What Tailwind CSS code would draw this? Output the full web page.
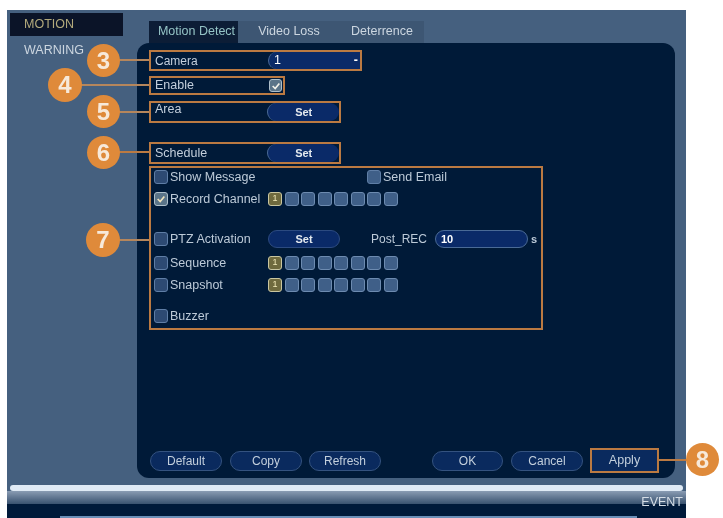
<!DOCTYPE html>
<html lang="en">
<head>
    <meta charset="UTF-8">
    <title>Motion Detect</title>
    <script src="https://cdn.jsdelivr.net/npm/@tailwindcss/browser@4"></script>
</head>
<body class="bg-white">
<div class="relative w-[723px] h-[518px] overflow-hidden bg-white font-['Liberation_Sans',Arial,sans-serif] text-[12.5px] text-[#c3cfdc] blur-[0.6px]">

    <!-- dvr window -->
    <div class="absolute left-[7px] top-[10px] w-[679px] h-[508px] flex flex-col bg-[#45607f]">
        <div class="flex h-[468px]">
            <!-- sidebar -->
            <aside class="w-[130px] pt-[3px] pl-[3px]">
                <div class="w-[113px] h-[23px] bg-[#0b1428] pl-[14px] flex items-center text-[#b3aa7c]">MOTION</div>
                <div class="pl-[14px] mt-[5px] text-[#ccd6e0]">WARNING</div>
            </aside>

            <div class="w-[538px] flex flex-col">
                <!-- tabs -->
                <div class="flex h-[33px] pt-[11px] pl-[12px]">
                    <div class="w-[89px] bg-[#0c1d36] text-[#95c4c6] flex items-center justify-center pl-[6px] pb-[2px]">Motion Detect</div>
                    <div class="w-[88px] bg-[#3d5673] text-[#ccd6e0] flex items-center justify-center pl-[14px] pb-[2px]">Video Loss</div>
                    <div class="w-[98px] bg-[#3d5673] text-[#ccd6e0] flex items-center justify-center pl-[14px] pb-[2px]">Deterrence</div>
                </div>

                <!-- panel -->
                <main class="flex-1 bg-[#001a38] rounded-[12px] flex flex-col pl-[12px]">
                    <div class="mt-[7px] w-[213px] h-[21px] border-2 border-[#bb7a42] flex items-center">
                        <span class="w-[117px] pl-[4px] text-[12px]">Camera</span>
                        <div class="w-[92px] h-[17px] rounded-l-full bg-[#0a2a68] border-l border-[#4a6a96] flex items-center justify-between pl-[5px] pr-[2px] text-white">
                            <span>1</span><span class="font-bold leading-none">-</span>
                        </div>
                    </div>

                    <div class="mt-[5px] w-[136px] h-[19px] border-2 border-[#bb7a42] flex items-center">
                        <span class="w-[118px] pl-[4px]">Enable</span>
                        <div class="w-[13px] h-[13px] rounded-[3px] bg-[#5a7488] border border-[#aebfca] flex items-center justify-center">
                            <svg viewBox="0 0 12 12" class="w-[10px] h-[10px]"><path d="M2 6l3 3 5-6" fill="none" stroke="#f2f2ea" stroke-width="2"/></svg>
                        </div>
                    </div>

                    <div class="mt-[6px] w-[192px] h-[22px] border-2 border-[#bb7a42] flex items-center">
                        <span class="w-[117px] pl-[4px] -mt-[6px]">Area</span>
                        <div class="w-[72px] h-[18px] rounded-full bg-[#0a2a68] border-l border-[#4a6a96] flex items-center justify-center font-bold text-[11px] text-[#e4e9ef]">Set</div>
                    </div>

                    <div class="mt-[19px] w-[192px] h-[22px] border-2 border-[#bb7a42] flex items-center">
                        <span class="w-[117px] pl-[4px]">Schedule</span>
                        <div class="w-[72px] h-[18px] rounded-full bg-[#0a2a68] border-l border-[#4a6a96] flex items-center justify-center font-bold text-[11px] text-[#e4e9ef]">Set</div>
                    </div>

                    <!-- linkage options -->
                    <div class="mt-[2px] w-[394px] h-[164px] border-2 border-[#bb7a42] pl-[3px] text-[#bccad8]">
                        <div class="h-[18px] flex items-center">
                            <span class="w-[14px] h-[14px] rounded-[3px] bg-[#2d4a73] border border-[#5f7ea6] mr-[2px]"></span>
                            <span class="w-[197px]">Show Message</span>
                            <span class="w-[14px] h-[14px] rounded-[3px] bg-[#3f5f88] border border-[#5f7ea6] mr-[2px]"></span>
                            <span>Send Email</span>
                        </div>

                        <div class="h-[18px] mt-[4px] flex items-center">
                            <span class="w-[14px] h-[14px] rounded-[3px] bg-[#5a7488] border border-[#aebfca] mr-[2px] flex items-center justify-center">
                                <svg viewBox="0 0 12 12" class="w-[10px] h-[10px]"><path d="M2 6l3 3 5-6" fill="none" stroke="#efe3bd" stroke-width="2"/></svg>
                            </span>
                            <span class="w-[98px] whitespace-nowrap">Record Channel</span>
                            <div class="flex gap-[2.5px] text-[9px]">
                                <span class="w-[14px] h-[14px] rounded-[3px] bg-[#6f6a3e] border border-[#c9c6a0] text-[#f0e9b8] flex items-center justify-center">1</span>
                                <span class="w-[14px] h-[14px] rounded-[3px] bg-[#3f5f88] border border-[#6d8bb0]"></span>
                                <span class="w-[14px] h-[14px] rounded-[3px] bg-[#3f5f88] border border-[#6d8bb0]"></span>
                                <span class="w-[14px] h-[14px] rounded-[3px] bg-[#3f5f88] border border-[#6d8bb0]"></span>
                                <span class="w-[14px] h-[14px] rounded-[3px] bg-[#3f5f88] border border-[#6d8bb0]"></span>
                                <span class="w-[14px] h-[14px] rounded-[3px] bg-[#3f5f88] border border-[#6d8bb0]"></span>
                                <span class="w-[14px] h-[14px] rounded-[3px] bg-[#3f5f88] border border-[#6d8bb0]"></span>
                                <span class="w-[14px] h-[14px] rounded-[3px] bg-[#3f5f88] border border-[#6d8bb0]"></span>
                            </div>
                        </div>

                        <div class="h-[18px] mt-[22px] flex items-center">
                            <span class="w-[14px] h-[14px] rounded-[3px] bg-[#2d4a73] border border-[#5f7ea6] mr-[2px]"></span>
                            <span class="w-[98px] whitespace-nowrap">PTZ Activation</span>
                            <div class="w-[72px] h-[18px] rounded-full bg-[#0a2a68] border border-[#2c4a80] flex items-center justify-center font-bold text-[11px] text-[#e4e9ef]">Set</div>
                            <span class="ml-[31px] w-[64px] text-[12px]">Post_REC</span>
                            <div class="w-[93px] h-[18px] rounded-[9px] bg-[#0a2a68] border border-[#4a6a96] pl-[5px] flex items-center font-bold text-[11px] text-white">10</div>
                            <span class="ml-[3px] font-bold text-[11px]">s</span>
                        </div>

                        <div class="h-[18px] mt-[6px] flex items-center">
                            <span class="w-[14px] h-[14px] rounded-[3px] bg-[#2d4a73] border border-[#5f7ea6] mr-[2px]"></span>
                            <span class="w-[98px]">Sequence</span>
                            <div class="flex gap-[2.5px] text-[9px]">
                                <span class="w-[14px] h-[14px] rounded-[3px] bg-[#6f6a3e] border border-[#c9c6a0] text-[#f0e9b8] flex items-center justify-center">1</span>
                                <span class="w-[14px] h-[14px] rounded-[3px] bg-[#3f5f88] border border-[#6d8bb0]"></span>
                                <span class="w-[14px] h-[14px] rounded-[3px] bg-[#3f5f88] border border-[#6d8bb0]"></span>
                                <span class="w-[14px] h-[14px] rounded-[3px] bg-[#3f5f88] border border-[#6d8bb0]"></span>
                                <span class="w-[14px] h-[14px] rounded-[3px] bg-[#3f5f88] border border-[#6d8bb0]"></span>
                                <span class="w-[14px] h-[14px] rounded-[3px] bg-[#3f5f88] border border-[#6d8bb0]"></span>
                                <span class="w-[14px] h-[14px] rounded-[3px] bg-[#3f5f88] border border-[#6d8bb0]"></span>
                                <span class="w-[14px] h-[14px] rounded-[3px] bg-[#3f5f88] border border-[#6d8bb0]"></span>
                            </div>
                        </div>

                        <div class="h-[18px] mt-[4px] flex items-center">
                            <span class="w-[14px] h-[14px] rounded-[3px] bg-[#2d4a73] border border-[#5f7ea6] mr-[2px]"></span>
                            <span class="w-[98px]">Snapshot</span>
                            <div class="flex gap-[2.5px] text-[9px]">
                                <span class="w-[14px] h-[14px] rounded-[3px] bg-[#6f6a3e] border border-[#c9c6a0] text-[#f0e9b8] flex items-center justify-center">1</span>
                                <span class="w-[14px] h-[14px] rounded-[3px] bg-[#3f5f88] border border-[#6d8bb0]"></span>
                                <span class="w-[14px] h-[14px] rounded-[3px] bg-[#3f5f88] border border-[#6d8bb0]"></span>
                                <span class="w-[14px] h-[14px] rounded-[3px] bg-[#3f5f88] border border-[#6d8bb0]"></span>
                                <span class="w-[14px] h-[14px] rounded-[3px] bg-[#3f5f88] border border-[#6d8bb0]"></span>
                                <span class="w-[14px] h-[14px] rounded-[3px] bg-[#3f5f88] border border-[#6d8bb0]"></span>
                                <span class="w-[14px] h-[14px] rounded-[3px] bg-[#3f5f88] border border-[#6d8bb0]"></span>
                                <span class="w-[14px] h-[14px] rounded-[3px] bg-[#3f5f88] border border-[#6d8bb0]"></span>
                            </div>
                        </div>

                        <div class="h-[18px] mt-[13px] flex items-center">
                            <span class="w-[14px] h-[14px] rounded-[3px] bg-[#2d4a73] border border-[#5f7ea6] mr-[2px]"></span>
                            <span>Buzzer</span>
                        </div>
                    </div>

                    <!-- footer buttons -->
                    <div class="mt-auto mb-[5px] flex items-center h-[25px] text-[#c3cfdc] text-[12px]">
                        <div class="ml-[1px] w-[72px] h-[20px] rounded-full bg-[#0a2a5e] border border-[#34527f] flex items-center justify-center">Default</div>
                        <div class="ml-[8px] w-[72px] h-[20px] rounded-full bg-[#0a2a5e] border border-[#34527f] flex items-center justify-center">Copy</div>
                        <div class="ml-[7px] w-[72px] h-[20px] rounded-full bg-[#0a2a5e] border border-[#34527f] flex items-center justify-center">Refresh</div>
                        <div class="ml-[51px] w-[71px] h-[20px] rounded-full bg-[#0a2a5e] border border-[#34527f] flex items-center justify-center">OK</div>
                        <div class="ml-[8px] w-[72px] h-[20px] rounded-full bg-[#0a2a5e] border border-[#34527f] flex items-center justify-center">Cancel</div>
                        <div class="ml-[7px] w-[69px] h-[25px] bg-[#0a2a5e] border-2 border-[#bb7a42] flex items-center justify-center text-[12.5px]">Apply</div>
                    </div>
                </main>
            </div>
        </div>

        <!-- status bar -->
        <div class="relative flex-1 mt-[7px]">
            <div class="mx-[3px] h-[6px] rounded-full bg-[#dfeaf5]"></div>
            <div class="h-[13px] bg-gradient-to-b from-[#8a9cb3] to-[#3a5370]"></div>
            <div class="h-[12px] bg-[#001a3a]"></div>
            <div class="flex h-[2px] bg-[#6a8fb8]">
                <div class="w-[53px] bg-[#001a3a]"></div>
                <div class="ml-auto w-[49px] bg-[#001a3a]"></div>
            </div>
            <span class="absolute right-[3px] top-[8px] text-[#d5dde6]">EVENT</span>
        </div>
    </div>

    <!-- callouts -->
    <div class="absolute left-[118px] top-[59px] w-[31px] h-[2px] bg-[#b5865c]"></div>
    <div class="absolute left-[80px] top-[84px] w-[69px] h-[2px] bg-[#b5865c]"></div>
    <div class="absolute left-[118px] top-[111px] w-[31px] h-[2px] bg-[#b5865c]"></div>
    <div class="absolute left-[118px] top-[151px] w-[31px] h-[2px] bg-[#bb7a42]"></div>
    <div class="absolute left-[118px] top-[239px] w-[31px] h-[2px] bg-[#b5865c]"></div>
    <div class="absolute left-[659px] top-[459px] w-[30px] h-[2px] bg-[#bb7a42]"></div>

    <div class="absolute left-[87px] top-[44px] w-[33px] h-[33px] rounded-full bg-[#df8a3a] flex items-center justify-center text-[24px] font-bold text-[#f7e9da]">3</div>
    <div class="absolute left-[48px] top-[68px] w-[34px] h-[34px] rounded-full bg-[#df8a3a] flex items-center justify-center text-[24px] font-bold text-[#f7e9da]">4</div>
    <div class="absolute left-[87px] top-[95px] w-[33px] h-[33px] rounded-full bg-[#df8a3a] flex items-center justify-center text-[24px] font-bold text-[#f7e9da]">5</div>
    <div class="absolute left-[87px] top-[136px] w-[33px] h-[33px] rounded-full bg-[#df8a3a] flex items-center justify-center text-[24px] font-bold text-[#f7e9da]">6</div>
    <div class="absolute left-[86px] top-[223px] w-[34px] h-[34px] rounded-full bg-[#df8a3a] flex items-center justify-center text-[24px] font-bold text-[#f7e9da]">7</div>
    <div class="absolute left-[686px] top-[443px] w-[33px] h-[33px] rounded-full bg-[#df8a3a] flex items-center justify-center text-[24px] font-bold text-[#f7e9da]">8</div>
</div>
</body>
</html>
